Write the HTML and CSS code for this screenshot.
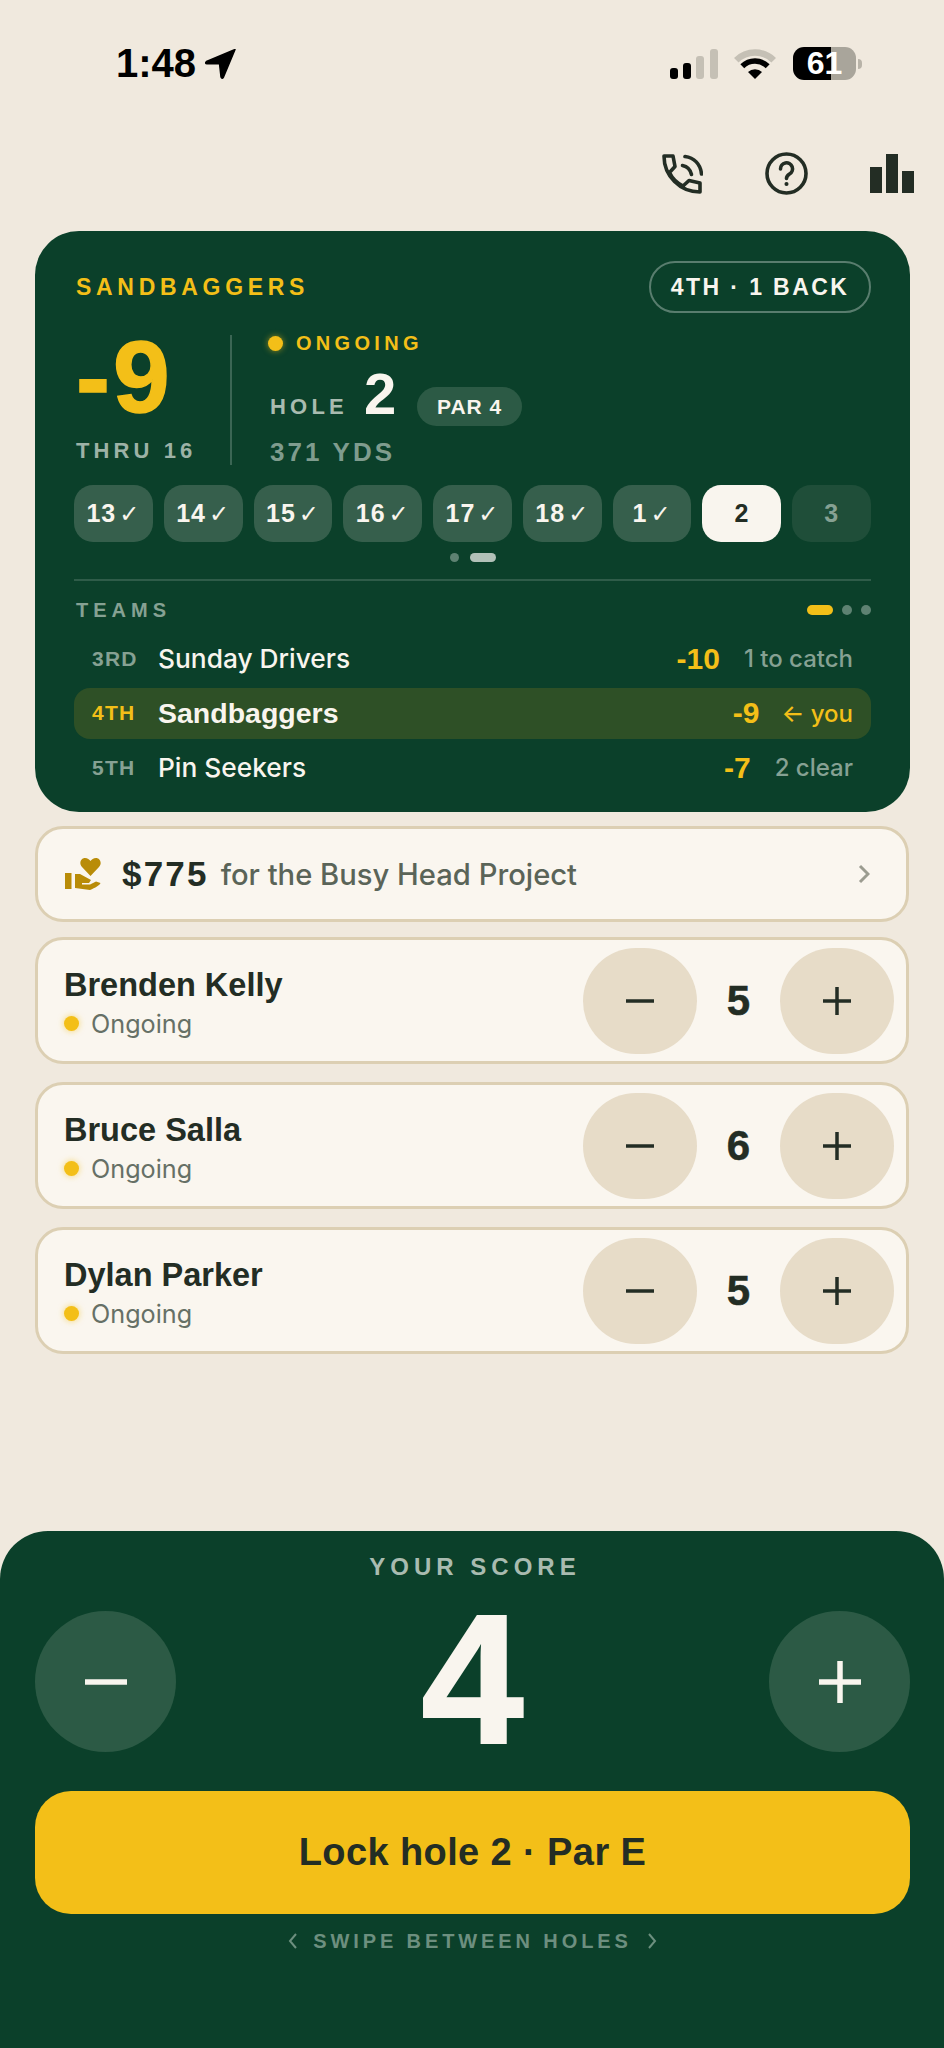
FILE: index.html
```html
<!DOCTYPE html>
<html lang="en">
<head>
  <meta charset="UTF-8" />
  <meta name="viewport" content="width=device-width, initial-scale=1.0"/>
  <title>Sandbaggers - Live Score</title>
  <link rel="stylesheet" href="styles.css">
</head>
<body>
  <div class="status-bar">
    <div class="status-time">
      <span>1:48</span>
      <svg class="status-arrow" viewBox="0 0 31 30"><path d="M30 .5 1.5 12.5Q-.5 14.5 2 14.8L14.5 14.5 16 28Q17 30.5 18.5 28Z" fill="#000" stroke="#000" stroke-width="1.500" stroke-linejoin="round"/></svg>
    </div>
    <div class="status-icons">
      <svg class="signal" viewBox="0 0 48 30">
        <rect x="0" y="19" width="8" height="11" rx="3" fill="#000"/>
        <rect x="13" y="14" width="8" height="16" rx="3" fill="#000"/>
        <rect x="26" y="7" width="8" height="23" rx="3" fill="#c5c0b5"/>
        <rect x="40" y="0" width="8" height="30" rx="3" fill="#c5c0b5"/>
      </svg>
      <svg class="wifi" viewBox="0 0 42 30">
        <path d="M2.3 11.3A26.5 26.5 0 0 1 39.7 11.3" fill="none" stroke="#c5c0b5" stroke-width="6.5"/>
        <path d="M8.3 17.3A18 18 0 0 1 33.7 17.3" fill="none" stroke="#000" stroke-width="5.5"/>
        <path d="M21 30 14 23A10 10 0 0 1 28 23Z" fill="#000"/>
      </svg>
      <div class="battery"><span>61</span></div>
      <div class="battery-nub"></div>
    </div>
  </div>

  <div class="toolbar">
    <svg class="tool-phone" viewBox="0 0 41 40" fill="none" stroke="#232d24" stroke-width="3.6" stroke-linejoin="round" stroke-linecap="round">
      <path d="M2 2H11L13 12.5 7.5 18.5C10 24 15 29 21 32L27 26.5 38 29V38C18 38 2 22 2 2Z"/>
      <path d="M23 2.5C32 3.500 38.500 10 39.500 20"/>
      <path d="M20.500 11.500C25 12.500 28.500 16 29.500 20.500"/>
    </svg>
    <svg class="tool-help" viewBox="0 0 43 43" fill="none" stroke="#232d24" stroke-width="3.6" stroke-linecap="round">
      <circle cx="21.500" cy="21.500" r="19.500"/>
      <path d="M15.500 17A6 6 0 1 1 24.500 22C22.500 23.300 21.500 24.500 21.500 26.500"/>
      <circle cx="21.500" cy="32" r="1.300" fill="#232d24" stroke-width="1.500"/>
    </svg>
    <svg class="tool-stats" viewBox="0 0 44 39" fill="#232d24">
      <rect x="0" y="13" width="12" height="26"/>
      <rect x="16" y="0" width="12" height="39"/>
      <rect x="32" y="17" width="12" height="22"/>
    </svg>
  </div>

  <div class="hero">
    <div class="hero-head">
      <span class="team-name">SANDBAGGERS</span>
      <span class="standing-pill">4TH · 1 BACK</span>
    </div>

    <div class="score-row">
      <div class="score-left">
        <div class="score-big">-9</div>
        <div class="score-thru">THRU 16</div>
      </div>
      <div class="score-right">
        <div class="hole-status"><span class="dot"></span>ONGOING</div>
        <div class="hole-line">
          <span class="hole-label">HOLE</span>
          <span class="hole-num">2</span>
          <span class="par-pill">PAR 4</span>
        </div>
        <div class="hole-yards">371 YDS</div>
      </div>
    </div>

    <div class="chips">
      <div class="chip done">13<i>✓</i></div>
      <div class="chip done">14<i>✓</i></div>
      <div class="chip done">15<i>✓</i></div>
      <div class="chip done">16<i>✓</i></div>
      <div class="chip done">17<i>✓</i></div>
      <div class="chip done">18<i>✓</i></div>
      <div class="chip done">1<i>✓</i></div>
      <div class="chip current">2</div>
      <div class="chip future">3</div>
    </div>
    <div class="chip-pager"><span></span><span class="on"></span></div>

    <div class="teams-head">
      <span class="teams-title">TEAMS</span>
      <div class="teams-pager"><span class="on"></span><span></span><span></span></div>
    </div>
    <div class="team-row">
      <span class="rank">3RD</span><span class="name">Sunday Drivers</span>
      <span class="team-score">-10</span><span class="note">1 to catch</span>
    </div>
    <div class="team-row me">
      <span class="rank">4TH</span><span class="name">Sandbaggers</span>
      <span class="team-score">-9</span><span class="note">← you</span>
    </div>
    <div class="team-row">
      <span class="rank">5TH</span><span class="name">Pin Seekers</span>
      <span class="team-score">-7</span><span class="note">2 clear</span>
    </div>
  </div>

  <div class="card donation">
    <svg class="donate-icon" viewBox="0 0 36 34" fill="#b98c08">
      <rect x="0" y="16" width="6.500" height="16"/>
      <path d="M25.500 19 17 10C13.500 6 16 1 20 1 22.500 1 24.500 2.500 25.500 4 26.500 2.500 28.500 1 31 1 35 1 37.500 6 34 10Z"/>
      <path d="M10 17H15L26 23 24 26H17V27.500H25L31 24.500 35.500 26C35 28 30 31 25 33L10 31Z"/>
    </svg>
    <span class="donate-amount">$775</span>
    <span class="donate-text">for the Busy Head Project</span>
    <svg class="donate-chevron" viewBox="0 0 12 20" fill="none" stroke="#9b9c90" stroke-width="3"><path d="M2 2 10 10 2 18"/></svg>
  </div>

  <div class="card player first">
    <div class="player-info">
      <div class="player-name">Brenden Kelly</div>
      <div class="player-status"><span class="dot"></span>Ongoing</div>
    </div>
    <div class="stepper">
      <div class="step-btn"><svg viewBox="0 0 28 28"><path d="M0 14H28" stroke="#232d24" stroke-width="3.500"/></svg></div>
      <div class="step-num">5</div>
      <div class="step-btn"><svg viewBox="0 0 28 28"><path d="M0 14H28M14 0V28" stroke="#232d24" stroke-width="3.500"/></svg></div>
    </div>
  </div>
  <div class="card player">
    <div class="player-info">
      <div class="player-name">Bruce Salla</div>
      <div class="player-status"><span class="dot"></span>Ongoing</div>
    </div>
    <div class="stepper">
      <div class="step-btn"><svg viewBox="0 0 28 28"><path d="M0 14H28" stroke="#232d24" stroke-width="3.500"/></svg></div>
      <div class="step-num">6</div>
      <div class="step-btn"><svg viewBox="0 0 28 28"><path d="M0 14H28M14 0V28" stroke="#232d24" stroke-width="3.500"/></svg></div>
    </div>
  </div>
  <div class="card player">
    <div class="player-info">
      <div class="player-name">Dylan Parker</div>
      <div class="player-status"><span class="dot"></span>Ongoing</div>
    </div>
    <div class="stepper">
      <div class="step-btn"><svg viewBox="0 0 28 28"><path d="M0 14H28" stroke="#232d24" stroke-width="3.500"/></svg></div>
      <div class="step-num">5</div>
      <div class="step-btn"><svg viewBox="0 0 28 28"><path d="M0 14H28M14 0V28" stroke="#232d24" stroke-width="3.500"/></svg></div>
    </div>
  </div>

  <div class="sheet">
    <div class="sheet-title">YOUR SCORE</div>
    <div class="sheet-score">
      <div class="big-btn"><svg viewBox="0 0 42 42"><path d="M0 21H42" stroke="#f9f5ee" stroke-width="5.500"/></svg></div>
      <div class="big-num">4</div>
      <div class="big-btn"><svg viewBox="0 0 42 42"><path d="M0 21H42M21 0V42" stroke="#f9f5ee" stroke-width="5.500"/></svg></div>
    </div>
    <div class="lock-btn">Lock hole 2 · Par E</div>
    <div class="swipe-hint">
      <svg viewBox="0 0 9 16" fill="none" stroke="#6d8f7f" stroke-width="2"><path d="M8 1 2 8 8 15"/></svg>
      <span>SWIPE BETWEEN HOLES</span>
      <svg viewBox="0 0 9 16" fill="none" stroke="#6d8f7f" stroke-width="2"><path d="M1 1 7 8 1 15"/></svg>
    </div>
  </div>
</body>
</html>
```

FILE: styles.css
```css
* {
  box-sizing: border-box;
}

body {
  margin: 0;
  width: 944px;
  height: 2048px;
  overflow: hidden;
  display: flex;
  flex-direction: column;
  background: #f0e9de;
  color: #232d24;
  font-family: "Liberation Sans", Arial, sans-serif;
}

/* status bar */
.status-bar {
  display: flex;
  justify-content: space-between;
  padding: 47px 82px 0 116px;
  height: 80px;
}

.status-time {
  display: flex;
  align-items: center;
  gap: 9px;
  height: 33px;
  font-size: 40px;
  font-weight: 700;
  color: #000;
}

.status-arrow {
  width: 31px;
  height: 30px;
}

.status-icons {
  display: flex;
  align-items: center;
  height: 33px;
}

.signal {
  width: 48px;
  height: 30px;
  margin-right: 16px;
}

.wifi {
  width: 42px;
  height: 30px;
  margin-right: 17px;
}

.battery {
  width: 63px;
  height: 33px;
  border-radius: 11px;
  background: linear-gradient(90deg, #000 60%, #a9a59b 60%);
  color: #fff;
  font-size: 32px;
  font-weight: 700;
  line-height: 33px;
  text-align: center;
}

.battery-nub {
  width: 4px;
  height: 10px;
  margin-left: 2px;
  border-radius: 0 4px 4px 0;
  background: #b8b3a8;
}

/* top icons */
.toolbar {
  display: flex;
  justify-content: flex-end;
  align-items: center;
  gap: 62px;
  height: 43px;
  margin-top: 72px;
  padding-right: 30px;
}

.tool-phone {
  width: 41px;
  height: 40px;
}

.tool-help {
  width: 43px;
  height: 43px;
}

.tool-stats {
  width: 44px;
  height: 39px;
}

/* hero card */
.hero {
  margin: 36px 34px 0 35px;
  padding: 30px 39px 19px;
  border-radius: 44px;
  background: #0b402a;
  color: #f9f5ee;
}

.hero-head {
  display: flex;
  justify-content: space-between;
  align-items: center;
  height: 52px;
}

.team-name {
  margin-left: 2px;
  font-size: 23px;
  font-weight: 700;
  letter-spacing: 4.7px;
  color: #f3bf18;
}

.standing-pill {
  width: 222px;
  height: 52px;
  border: 2px solid rgba(255, 255, 255, 0.32);
  border-radius: 26px;
  font-size: 23px;
  font-weight: 700;
  letter-spacing: 2.4px;
  line-height: 48px;
  text-align: center;
}

.score-row {
  display: flex;
  height: 130px;
  margin-top: 22px;
}

.score-left {
  width: 158px;
  padding-left: 2px;
  border-right: 2px solid rgba(255, 255, 255, 0.2);
}

.score-big {
  height: 84px;
  font-size: 102px;
  font-weight: 700;
  letter-spacing: 3px;
  line-height: 84px;
  color: #f3bf18;
  -webkit-text-stroke: 1.5px #f3bf18;
}

.score-thru {
  margin-top: 19px;
  font-size: 22px;
  font-weight: 700;
  letter-spacing: 4.1px;
  line-height: 26px;
  color: #9db2a6;
}

.score-right {
  padding-left: 38px;
}

.dot {
  display: inline-block;
  flex: none;
  width: 15px;
  height: 15px;
  border-radius: 50%;
  background: #f3bf18;
  box-shadow: 0 0 6px rgba(243, 191, 24, 0.6);
}

.hole-status {
  display: flex;
  align-items: center;
  gap: 13px;
  height: 16px;
  margin-left: -2px;
  font-size: 20px;
  font-weight: 700;
  letter-spacing: 4.3px;
  color: #f3bf18;
}

.hole-line {
  display: flex;
  align-items: baseline;
  height: 58px;
  margin-top: 14px;
}

.hole-label {
  width: 94px;
  font-size: 22px;
  font-weight: 700;
  letter-spacing: 4.2px;
  color: #a9bbb0;
}

.hole-num {
  width: 53px;
  font-size: 58px;
  font-weight: 700;
  line-height: 58px;
}

.par-pill {
  height: 39px;
  padding: 0 20px;
  border-radius: 20px;
  background: #2c5a45;
  font-size: 21px;
  font-weight: 700;
  letter-spacing: 1px;
  line-height: 39px;
}

.hole-yards {
  margin-top: 15px;
  font-size: 26px;
  font-weight: 700;
  letter-spacing: 3.1px;
  line-height: 28px;
  color: #7f9c8e;
}

/* hole chips */
.chips {
  display: flex;
  gap: 11px;
  margin-top: 20px;
}

.chip {
  flex: 1;
  height: 57px;
  border-radius: 19px;
  font-size: 25px;
  font-weight: 700;
  letter-spacing: 1px;
  line-height: 57px;
  text-align: center;
}

.chip i {
  margin-left: 3px;
  font-family: "DejaVu Sans", sans-serif;
  font-size: 24px;
  font-style: normal;
  font-weight: 400;
}

.chip.done {
  background: #365f4c;
}

.chip.current {
  background: #f9f5ee;
  color: #232d24;
}

.chip.future {
  background: #1f4e39;
  color: #86a193;
}

.chip-pager {
  display: flex;
  justify-content: center;
  gap: 11px;
  margin-top: 11px;
}

.chip-pager span {
  width: 9px;
  height: 9px;
  border-radius: 5px;
  background: #5e8272;
}

.chip-pager span.on {
  width: 26px;
  background: #b2c1b8;
}

.teams-head {
  display: flex;
  justify-content: space-between;
  align-items: center;
  height: 30px;
  margin-top: 17px;
  margin-bottom: 8px;
  padding-top: 14px;
  box-sizing: content-box;
  border-top: 2px solid rgba(255, 255, 255, 0.15);
}

.teams-title {
  margin-left: 2px;
  font-size: 20px;
  font-weight: 700;
  letter-spacing: 5px;
  color: #86a193;
}

.teams-pager {
  display: flex;
  gap: 9px;
}

.teams-pager span {
  width: 10px;
  height: 10px;
  border-radius: 5px;
  background: #5e8272;
}

.teams-pager span.on {
  width: 26px;
  background: #f3bf18;
}

.team-row {
  display: flex;
  align-items: center;
  height: 51px;
  margin-top: 3.5px;
  padding: 0 18px;
  border-radius: 16px;
}

.team-row .rank {
  width: 66px;
  font-size: 21px;
  font-weight: 700;
  letter-spacing: 1.2px;
  color: #86a193;
}

.team-row .name {
  flex: 1;
  font-family: Inter, "Liberation Sans", sans-serif;
  font-size: 26.3px;
  font-weight: 500;
}

.team-row .team-score {
  margin-right: 24px;
  font-size: 30px;
  font-weight: 700;
  color: #f3bf18;
}

.team-row .note {
  font-family: Inter, "Liberation Sans", sans-serif;
  font-size: 24px;
  font-weight: 500;
  color: #86a193;
}

.team-row.me {
  background: #2e5026;
}

.team-row.me .rank,
.team-row.me .note {
  color: #f3bf18;
}

.team-row.me .team-score {
  margin-right: 22px;
}

.team-row.me .name {
  font-family: "Liberation Sans", sans-serif;
  font-size: 28.5px;
  font-weight: 700;
}

/* cards */
.card {
  margin: 0 35px;
  border: 3px solid #dccfb3;
  border-radius: 28px;
  background: #faf6ef;
  display: flex;
  align-items: center;
}

.donation {
  height: 96px;
  margin-top: 14px;
  padding: 0 36px 0 27px;
}

.donate-icon {
  width: 36px;
  height: 34px;
  margin-right: 21px;
}

.donate-amount {
  margin-right: 12px;
  font-size: 35px;
  font-weight: 700;
  letter-spacing: 2.2px;
}

.donate-text {
  flex: 1;
  font-family: Inter, "Liberation Sans", sans-serif;
  font-size: 29.2px;
  font-weight: 500;
  color: #5a6458;
}

.donate-chevron {
  width: 12px;
  height: 20px;
}

.player {
  height: 127px;
  margin-top: 18px;
  padding: 0 12px 0 26px;
  justify-content: space-between;
}

.player.first {
  margin-top: 15px;
}

.player-info {
  padding-top: 4px;
}

.player-name {
  font-size: 32.5px;
  font-weight: 700;
}

.player-status {
  display: flex;
  align-items: center;
  gap: 12px;
  margin-top: 5px;
  font-family: Inter, "Liberation Sans", sans-serif;
  font-size: 25.2px;
  color: #667066;
}

.stepper {
  display: flex;
  align-items: center;
}

.step-btn {
  display: flex;
  align-items: center;
  justify-content: center;
  width: 114px;
  height: 106px;
  border-radius: 53px;
  background: #e7dcc8;
}

.step-btn svg {
  width: 28px;
  height: 28px;
}

.step-num {
  width: 83px;
  font-size: 42px;
  font-weight: 700;
  text-align: center;
  -webkit-text-stroke: 0.5px #232d24;
}

/* bottom sheet */
.sheet {
  margin-top: auto;
  height: 517px;
  padding: 0 34px 0 35px;
  border-radius: 48px 48px 0 0;
  background: #0b402a;
  color: #f9f5ee;
  overflow: hidden;
}

.sheet-title {
  margin-top: 22px;
  padding-left: 5px;
  font-size: 24px;
  font-weight: 700;
  letter-spacing: 5px;
  line-height: 28px;
  text-align: center;
  color: #a9bbb0;
}

.sheet-score {
  display: flex;
  justify-content: space-between;
  align-items: center;
  margin-top: 30px;
}

.big-btn {
  display: flex;
  align-items: center;
  justify-content: center;
  width: 141px;
  height: 141px;
  border-radius: 50%;
  background: #2c5a45;
}

.big-btn svg {
  width: 42px;
  height: 42px;
}

.big-num {
  font-size: 184px;
  font-weight: 700;
  line-height: 137px;
  height: 141px;
  -webkit-text-stroke: 2px #f9f5ee;
}

.lock-btn {
  height: 123px;
  margin-top: 39px;
  border-radius: 36px;
  background: #f3bf18;
  color: #232d24;
  font-size: 38px;
  font-weight: 700;
  letter-spacing: 0.4px;
  line-height: 123px;
  text-align: center;
}

.swipe-hint {
  display: flex;
  justify-content: center;
  align-items: center;
  gap: 16px;
  margin-top: 15px;
  font-size: 20px;
  font-weight: 700;
  letter-spacing: 3.9px;
  line-height: 24px;
  color: #6d8f7f;
}

.swipe-hint svg {
  width: 9px;
  height: 16px;
}
```
